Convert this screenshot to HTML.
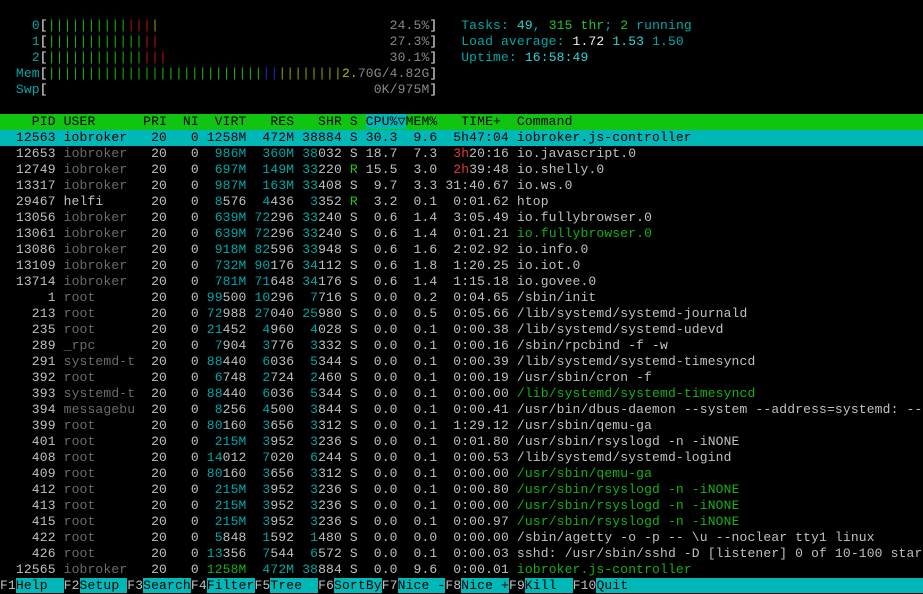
<!DOCTYPE html>
<html><head><meta charset="utf-8"><style>
html,body{margin:0;padding:0;background:#000;width:923px;height:589px;overflow:hidden}
#t{position:absolute;left:0;top:18px;width:923px;font:13px/16px "Liberation Mono","DejaVu Sans Mono",monospace;letter-spacing:0.15px;color:#c0c0c0}
.l{height:16px;white-space:pre;overflow:hidden}
.c{color:#00a8a8}.C{color:#2ed4d4}.g{color:#16b016}.G{color:#22c822}.d{color:#6c6c6c}.r{color:#e03c3c}.W{color:#f0f0f0}.y{color:#b8b800}.o{color:#9a9a00}.b{color:#2020d8}.k{color:#888}.rd{color:#b01010}
.hd{background:#12c412;color:#000}.sel{background:#00b8b8;color:#000}.cb{background:#00b8b8}
.fk{background:#00b8b8;color:#000}
</style></head><body><div id="t">
<div class="l">    <span class="c">0</span><span class="W">[</span><span class="g">||||||||||</span><span class="rd">|||</span><span class="o">|</span>                             <span class="k">24.5%</span><span class="W">]</span>   <span class="c">Tasks: </span><span class="C">49</span><span class="c">, </span><span class="G">315 thr</span><span class="c">; </span><span class="G">2</span><span class="c"> running</span></div>
<div class="l">    <span class="c">1</span><span class="W">[</span><span class="g">||||||||||||</span><span class="rd">||</span>                             <span class="k">27.3%</span><span class="W">]</span>   <span class="c">Load average: </span><span class="W">1.72 </span><span class="C">1.53 </span><span class="c">1.50</span></div>
<div class="l">    <span class="c">2</span><span class="W">[</span><span class="g">||||||||||||</span><span class="rd">|||</span>                            <span class="k">30.1%</span><span class="W">]</span>   <span class="c">Uptime: </span><span class="C">16:58:49</span></div>
<div class="l">  <span class="c">Mem</span><span class="W">[</span><span class="g">|||||||||||||||||||||||||||</span><span class="b">||</span><span class="o">||||||||</span><span class="y">2.</span><span class="k">70G/4.82G</span><span class="W">]</span></div>
<div class="l">  <span class="c">Swp</span><span class="W">[</span>                                         <span class="k">0K/975M</span><span class="W">]</span></div>
<div class="l"> </div>
<div class="l hd">    PID USER      PRI  NI  VIRT   RES   SHR S <span class="cb">CPU%▽</span>MEM%   TIME+  Command                                                    </div>
<div class="l sel">  12563 iobroker   20   0 1258M  472M 38884 S 30.3  9.6  5h47:04 iobroker.js-controller                                    </div>
<div class="l">  12653 <span class="d">iobroker </span>  20   0 <span class="c"> 986M</span> <span class="c"> 360M</span> <span class="c">38</span>032 S 18.7  7.3  <span class="r">3h</span>20:16 io.javascript.0</div>
<div class="l">  12749 <span class="d">iobroker </span>  20   0 <span class="c"> 697M</span> <span class="c"> 149M</span> <span class="c">33</span>220 <span class="G">R</span> 15.5  3.0  <span class="r">2h</span>39:48 io.shelly.0</div>
<div class="l">  13317 <span class="d">iobroker </span>  20   0 <span class="c"> 987M</span> <span class="c"> 163M</span> <span class="c">33</span>408 S  9.7  3.3 31:40.67 io.ws.0</div>
<div class="l">  29467 helfi      20   0  <span class="c">8</span>576  <span class="c">4</span>436  <span class="c">3</span>352 <span class="G">R</span>  3.2  0.1  0:01.62 htop</div>
<div class="l">  13056 <span class="d">iobroker </span>  20   0 <span class="c"> 639M</span> <span class="c">72</span>296 <span class="c">33</span>240 S  0.6  1.4  3:05.49 io.fullybrowser.0</div>
<div class="l">  13061 <span class="d">iobroker </span>  20   0 <span class="c"> 639M</span> <span class="c">72</span>296 <span class="c">33</span>240 S  0.6  1.4  0:01.21 <span class="g">io.fullybrowser.0</span></div>
<div class="l">  13086 <span class="d">iobroker </span>  20   0 <span class="c"> 918M</span> <span class="c">82</span>596 <span class="c">33</span>948 S  0.6  1.6  2:02.92 io.info.0</div>
<div class="l">  13109 <span class="d">iobroker </span>  20   0 <span class="c"> 732M</span> <span class="c">90</span>176 <span class="c">34</span>112 S  0.6  1.8  1:20.25 io.iot.0</div>
<div class="l">  13714 <span class="d">iobroker </span>  20   0 <span class="c"> 781M</span> <span class="c">71</span>648 <span class="c">34</span>176 S  0.6  1.4  1:15.18 io.govee.0</div>
<div class="l">      1 <span class="d">root     </span>  20   0 <span class="c">99</span>500 <span class="c">10</span>296  <span class="c">7</span>716 S  0.0  0.2  0:04.65 /sbin/init</div>
<div class="l">    213 <span class="d">root     </span>  20   0 <span class="c">72</span>988 <span class="c">27</span>040 <span class="c">25</span>980 S  0.0  0.5  0:05.66 /lib/systemd/systemd-journald</div>
<div class="l">    235 <span class="d">root     </span>  20   0 <span class="c">21</span>452  <span class="c">4</span>960  <span class="c">4</span>028 S  0.0  0.1  0:00.38 /lib/systemd/systemd-udevd</div>
<div class="l">    289 <span class="d">_rpc     </span>  20   0  <span class="c">7</span>904  <span class="c">3</span>776  <span class="c">3</span>332 S  0.0  0.1  0:00.16 /sbin/rpcbind -f -w</div>
<div class="l">    291 <span class="d">systemd-t</span>  20   0 <span class="c">88</span>440  <span class="c">6</span>036  <span class="c">5</span>344 S  0.0  0.1  0:00.39 /lib/systemd/systemd-timesyncd</div>
<div class="l">    392 <span class="d">root     </span>  20   0  <span class="c">6</span>748  <span class="c">2</span>724  <span class="c">2</span>460 S  0.0  0.1  0:00.19 /usr/sbin/cron -f</div>
<div class="l">    393 <span class="d">systemd-t</span>  20   0 <span class="c">88</span>440  <span class="c">6</span>036  <span class="c">5</span>344 S  0.0  0.1  0:00.00 <span class="g">/lib/systemd/systemd-timesyncd</span></div>
<div class="l">    394 <span class="d">messagebu</span>  20   0  <span class="c">8</span>256  <span class="c">4</span>500  <span class="c">3</span>844 S  0.0  0.1  0:00.41 /usr/bin/dbus-daemon --system --address=systemd: --</div>
<div class="l">    399 <span class="d">root     </span>  20   0 <span class="c">80</span>160  <span class="c">3</span>656  <span class="c">3</span>312 S  0.0  0.1  1:29.12 /usr/sbin/qemu-ga</div>
<div class="l">    401 <span class="d">root     </span>  20   0 <span class="c"> 215M</span>  <span class="c">3</span>952  <span class="c">3</span>236 S  0.0  0.1  0:01.80 /usr/sbin/rsyslogd -n -iNONE</div>
<div class="l">    408 <span class="d">root     </span>  20   0 <span class="c">14</span>012  <span class="c">7</span>020  <span class="c">6</span>244 S  0.0  0.1  0:00.53 /lib/systemd/systemd-logind</div>
<div class="l">    409 <span class="d">root     </span>  20   0 <span class="c">80</span>160  <span class="c">3</span>656  <span class="c">3</span>312 S  0.0  0.1  0:00.00 <span class="g">/usr/sbin/qemu-ga</span></div>
<div class="l">    412 <span class="d">root     </span>  20   0 <span class="c"> 215M</span>  <span class="c">3</span>952  <span class="c">3</span>236 S  0.0  0.1  0:00.80 <span class="g">/usr/sbin/rsyslogd -n -iNONE</span></div>
<div class="l">    413 <span class="d">root     </span>  20   0 <span class="c"> 215M</span>  <span class="c">3</span>952  <span class="c">3</span>236 S  0.0  0.1  0:00.00 <span class="g">/usr/sbin/rsyslogd -n -iNONE</span></div>
<div class="l">    415 <span class="d">root     </span>  20   0 <span class="c"> 215M</span>  <span class="c">3</span>952  <span class="c">3</span>236 S  0.0  0.1  0:00.97 <span class="g">/usr/sbin/rsyslogd -n -iNONE</span></div>
<div class="l">    422 <span class="d">root     </span>  20   0  <span class="c">5</span>848  <span class="c">1</span>592  <span class="c">1</span>480 S  0.0  0.0  0:00.00 /sbin/agetty -o -p -- \u --noclear tty1 linux</div>
<div class="l">    426 <span class="d">root     </span>  20   0 <span class="c">13</span>356  <span class="c">7</span>544  <span class="c">6</span>572 S  0.0  0.1  0:00.03 sshd: /usr/sbin/sshd -D [listener] 0 of 10-100 startups</div>
<div class="l">  12565 <span class="d">iobroker </span>  20   0 <span class="g">1258M</span> <span class="c"> 472M</span> <span class="c">38</span>884 S  0.0  9.6  0:00.01 <span class="g">iobroker.js-controller</span></div>
<div class="l">F1<span class="fk">Help  </span>F2<span class="fk">Setup </span>F3<span class="fk">Search</span>F4<span class="fk">Filter</span>F5<span class="fk">Tree  </span>F6<span class="fk">SortBy</span>F7<span class="fk">Nice -</span>F8<span class="fk">Nice +</span>F9<span class="fk">Kill  </span>F10<span class="fk">Quit                                             </span></div>
</div></body></html>
